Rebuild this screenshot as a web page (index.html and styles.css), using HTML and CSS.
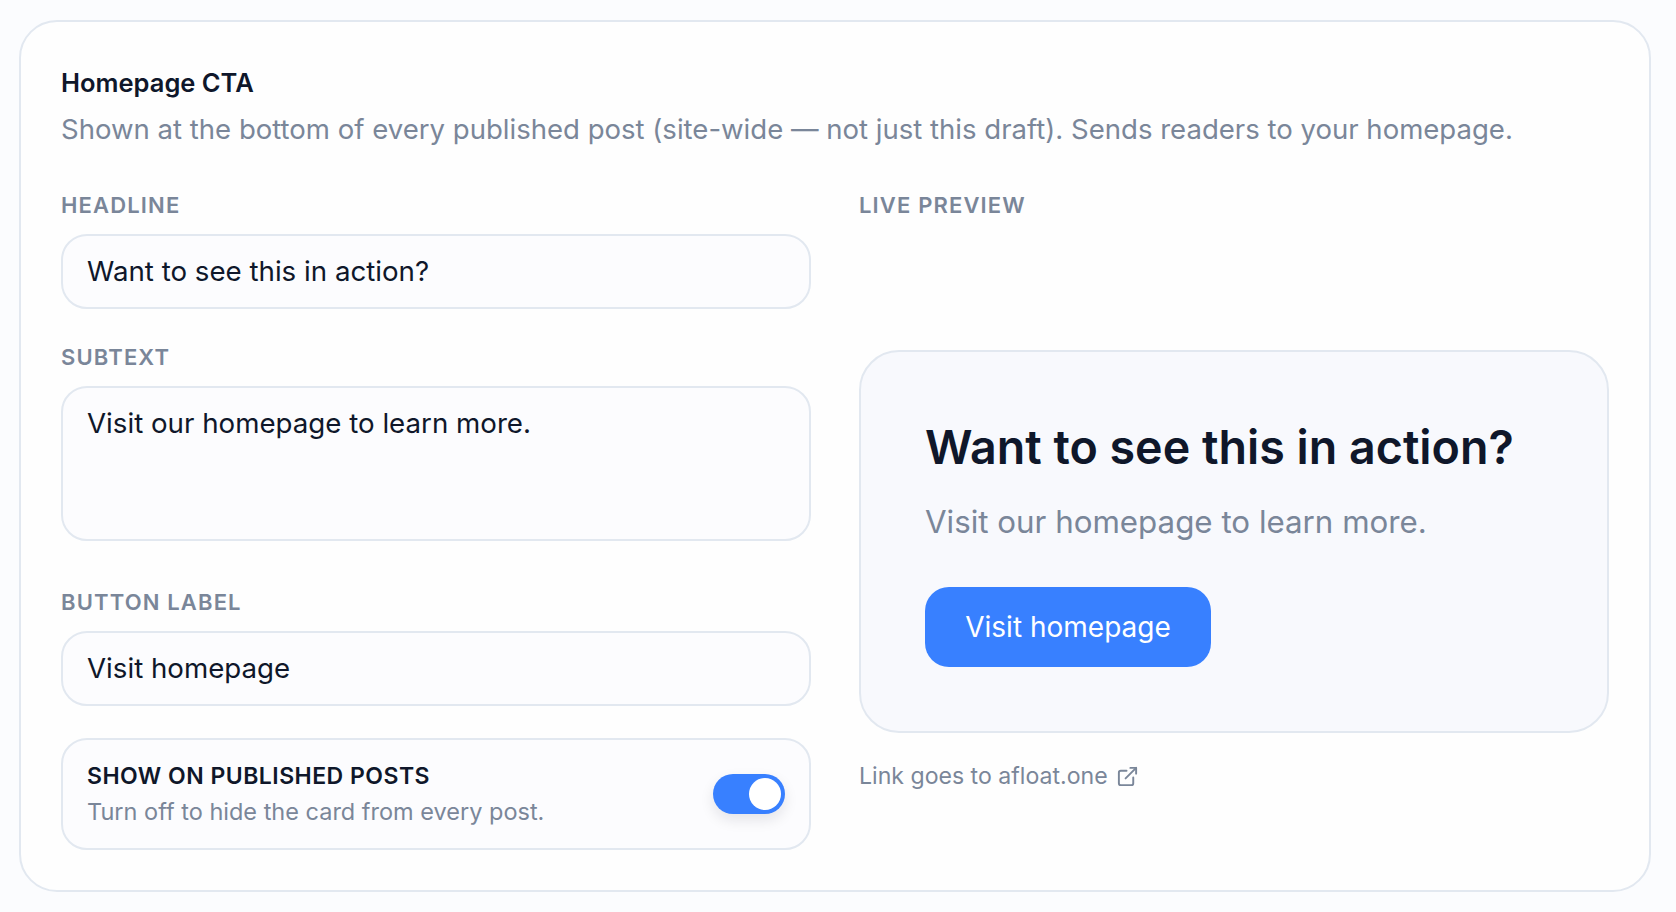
FILE: index.html
```html
<!DOCTYPE html>
<html lang="en">
<head>
	<meta charset="UTF-8">
	<meta name="viewport" content="width=device-width, initial-scale=1.0">
	<link rel="stylesheet" href="styles.css">
	<title>Homepage CTA</title>
</head>
<body>
	<section class="card">
		<h3 class="card-title">Homepage CTA</h3>
		<p class="card-desc">Shown at the bottom of every published post (site-wide — not just this draft). Sends readers to your homepage.</p>
		<div class="columns">
			<div class="form-col">
				<label class="label">Headline</label>
				<input class="field field-input" type="text" value="Want to see this in action?">
				<label class="label">Subtext</label>
				<textarea class="field field-area">Visit our homepage to learn more.</textarea>
				<label class="label">Button label</label>
				<input class="field field-input" type="text" value="Visit homepage">
				<div class="toggle-row">
					<div class="toggle-text">
						<p class="toggle-title">Show on published posts</p>
						<p class="toggle-sub">Turn off to hide the card from every post.</p>
					</div>
					<div class="toggle"><span class="knob"></span></div>
				</div>
			</div>
			<div class="preview-col">
				<div class="label">Live preview</div>
				<div class="preview">
					<h2 class="preview-title">Want to see this in action?</h2>
					<p class="preview-sub">Visit our homepage to learn more.</p>
					<a class="preview-btn">Visit homepage</a>
				</div>
				<p class="note">Link goes to afloat.one
					<svg class="note-icon" viewBox="0 0 24 24" fill="none" stroke="currentColor" stroke-width="2" stroke-linecap="round" stroke-linejoin="round">
						<path d="M18 13v6a2 2 0 0 1-2 2H5a2 2 0 0 1-2-2V8a2 2 0 0 1 2-2h6"/>
						<polyline points="15 3 21 3 21 9"/>
						<line x1="10" y1="14" x2="21" y2="3"/>
					</svg>
				</p>
			</div>
		</div>
	</section>
</body>
</html>
```

FILE: styles.css
```css
*{
	padding: 0;
	margin: 0;
	box-sizing: border-box;
	font-family: Inter, "Noto Sans", sans-serif;
}
body{
	min-height: 100vh;
	background-color: #fbfcfe;
	padding: 20px 25px 20px 19px;
}
.card{
	background-color: #fefefe;
	border: 2px solid #e2e8f0;
	border-radius: 38px;
	padding: 45px 39px 40px 40px;
}
.card-title{
	font-size: 25.5px;
	line-height: 32px;
	font-weight: 600;
	color: #0f172a;
	margin-bottom: 11px;
}
.card-desc{
	font-size: 27.55px;
	line-height: 38px;
	color: #7a8699;
	margin-bottom: 43px;
}
.columns{
	display: grid;
	grid-template-columns: 750px 750px;
	gap: 48px;
}
.form-col, .preview-col{
	display: flex;
	flex-direction: column;
}
.label{
	display: block;
	font-size: 22px;
	line-height: 28px;
	font-weight: 600;
	letter-spacing: 1.15px;
	color: #7a8699;
	text-transform: uppercase;
	margin-bottom: 15px;
}
.field{
	display: block;
	width: 100%;
	background-color: #fcfcfe;
	border: 2px solid #e2e8f0;
	border-radius: 26px;
	color: #0f172a;
	font-size: 27.7px;
	outline: none;
}
.field-input{
	height: 75px;
	padding: 0 24px 2px;
	margin-bottom: 34px;
}
.field-area{
	height: 155px;
	padding: 16px 24px;
	line-height: 38px;
	resize: none;
	margin-bottom: 47px;
}
.toggle-row{
	height: 112px;
	margin-top: -2px;
	display: flex;
	align-items: center;
	justify-content: space-between;
	background-color: #fcfcfe;
	border: 2px solid #e2e8f0;
	border-radius: 26px;
	padding: 0 24px;
}
.toggle-title{
	font-size: 23px;
	line-height: 32px;
	font-weight: 600;
	letter-spacing: 0.48px;
	color: #0f172a;
	text-transform: uppercase;
}
.toggle-sub{
	font-size: 23.5px;
	line-height: 32px;
	color: #7a8699;
	margin-top: 4px;
}
.toggle{
	width: 72px;
	height: 40px;
	border-radius: 20px;
	background-color: #3880ff;
	box-shadow: 0 6px 14px rgba(15, 23, 42, 0.1);
	display: flex;
	align-items: center;
	justify-content: flex-end;
	padding: 0 4px;
}
.knob{
	width: 32px;
	height: 32px;
	border-radius: 50%;
	background-color: #fff;
}
.preview{
	height: 383px;
	margin-top: 116px;
	background-color: #f8f9fd;
	border: 2px solid #e2e8f0;
	border-radius: 40px;
	padding: 67px 64px 63px;
}
.preview-title{
	font-size: 46.6px;
	line-height: 56px;
	font-weight: 600;
	color: #0f172a;
	margin-bottom: 27px;
}
.preview-sub{
	font-size: 31.3px;
	line-height: 40px;
	color: #7a8699;
	margin-bottom: 45px;
}
.preview-btn{
	display: inline-flex;
	align-items: center;
	justify-content: center;
	width: 286px;
	height: 80px;
	background-color: #3880ff;
	border-radius: 24px;
	color: #fff;
	font-size: 28px;
}
.note{
	display: flex;
	align-items: center;
	gap: 8px;
	margin-top: 28px;
	font-size: 23.1px;
	line-height: 30px;
	color: #7a8699;
}
.note-icon{
	width: 23px;
	height: 23px;
}
```
